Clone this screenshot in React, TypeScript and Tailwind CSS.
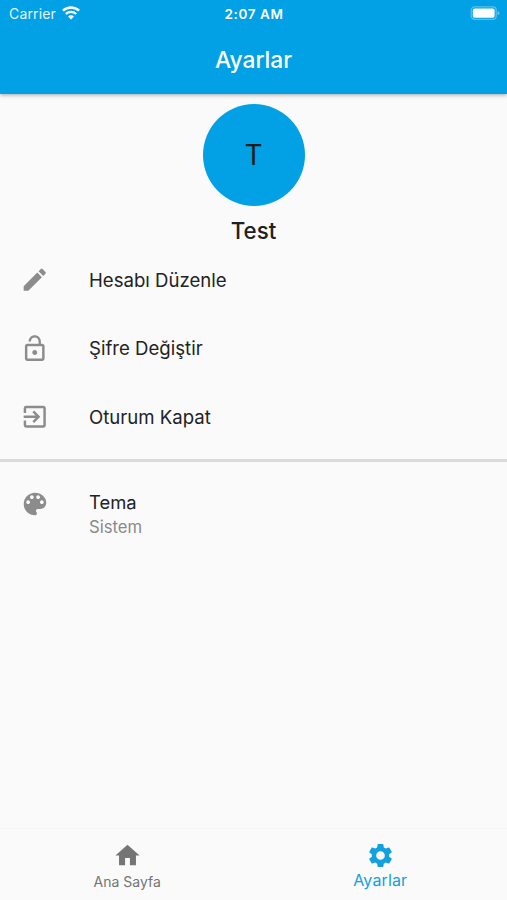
import type { ReactNode } from "react";
import {
  MdEdit,
  MdExitToApp,
  MdHome,
  MdLockOpen,
  MdSettings,
} from "react-icons/md";
import type { IconType } from "react-icons";

interface TileProps {
  icon: IconType;
  children: ReactNode;
}

const WifiIcon = () => (
  <svg viewBox="0 0 18 14" className="h-[14px] w-[18px]" fill="none">
    <path d="M.9 4.7a11.8 11.8 0 0 1 16.2 0" stroke="white" strokeWidth="2.5" />
    <path d="M3.8 8a7.5 7.5 0 0 1 10.4 0" stroke="white" strokeWidth="2.3" />
    <path d="M9 13.6 6 10.6a4.2 4.2 0 0 1 6 0z" fill="white" />
  </svg>
);

const BatteryIcon = () => (
  <svg viewBox="0 0 30 14" className="h-[14px] w-[30px]" fill="none">
    <rect
      x="1.2"
      y="0.9"
      width="25"
      height="12.4"
      rx="3.4"
      stroke="white"
      strokeOpacity="0.35"
      strokeWidth="1.3"
    />
    <rect x="2.8" y="2.5" width="21.8" height="9.2" rx="1.8" fill="white" />
    <path d="M27.6 5c2.4.8 2.4 3.4 0 4.2z" fill="white" fillOpacity="0.45" />
  </svg>
);

const PaletteIcon = () => (
  <svg
    viewBox="0 0 24 24"
    className="-mt-px size-[30px] shrink-0 text-[#8c8c8c]"
    fill="currentColor"
  >
    <path d="M12 3c-4.97 0-9 4.03-9 9s4.03 9 9 9c.83 0 1.5-.67 1.5-1.5 0-.39-.15-.74-.39-1.01-.23-.26-.38-.61-.38-.99 0-.83.67-1.5 1.5-1.5H16c2.76 0 5-2.24 5-5 0-4.42-4.03-8-9-8zm-5.5 9c-.83 0-1.5-.67-1.5-1.5S5.67 9 6.5 9 8 9.67 8 10.5 7.33 12 6.5 12zm3-4C8.67 8 8 7.33 8 6.5S8.67 5 9.5 5s1.5.67 1.5 1.5S10.33 8 9.5 8zm5 0c-.83 0-1.5-.67-1.5-1.5S13.67 5 14.5 5s1.5.67 1.5 1.5S15.33 8 14.5 8zm3 4c-.83 0-1.5-.67-1.5-1.5S16.67 9 17.5 9s1.5.67 1.5 1.5-.67 1.5-1.5 1.5z" />
  </svg>
);

const StatusBar = () => (
  <div className="grid h-[26px] grid-cols-3 items-center px-[7px]">
    <div className="flex items-center gap-[6px] pl-[2px] text-[14px] tracking-[0.15px] text-white/90">
      <span>Carrier</span>
      <WifiIcon />
    </div>
    <span className="pt-[2px] pl-px text-center text-[13.5px] font-semibold tracking-[0.6px]">
      2:07 AM
    </span>
    <div className="flex justify-end">
      <BatteryIcon />
    </div>
  </div>
);

const Tile = ({ icon: Icon, children }: TileProps) => (
  <li className="flex h-[68.5px] items-center pl-5">
    <Icon className="size-[29.5px] shrink-0 text-[#8c8c8c]" />
    <span className="ml-[39.5px] text-[18.6px] leading-6 whitespace-nowrap text-[#222]">
      {children}
    </span>
  </li>
);

export default function App() {
  return (
    <div className="flex h-screen w-full flex-col bg-[#fafafa] font-['Inter',sans-serif]">
      <header className="z-10 h-[94px] shrink-0 bg-[#02a0e4] text-white shadow-[0_1px_4px_rgba(0,0,0,0.35)]">
        <StatusBar />
        <h1 className="pt-[18px] text-center text-[22.8px] leading-8 font-medium">
          Ayarlar
        </h1>
      </header>

      <main className="flex-1">
        <div className="flex flex-col items-center pt-[9.5px] pl-px">
          <div className="flex size-[102.5px] items-center justify-center rounded-full bg-[#02a0e4] pr-px text-[28px] text-[#1d1d1d]">
            T
          </div>
          <p className="mt-[9px] pr-px text-[22.3px] leading-8 font-medium text-[#202020]">
            Test
          </p>
        </div>

        <ul className="-mt-[1.3px]">
          <Tile icon={MdEdit}>Hesabı Düzenle</Tile>
          <Tile icon={MdLockOpen}>Şifre Değiştir</Tile>
          <Tile icon={MdExitToApp}>Oturum Kapat</Tile>
        </ul>

        <div className="mt-[7.8px] h-[2.5px] bg-[#dadada]" />

        <div className="flex pt-[28px] pl-5">
          <PaletteIcon />
          <div className="ml-[39px]">
            <p className="text-[18.4px] leading-[25px] text-[#222]">Tema</p>
            <p className="text-[16.7px] leading-[25px] text-[#8a8a8a]">
              Sistem
            </p>
          </div>
        </div>
      </main>

      <nav className="grid h-[72px] shrink-0 grid-cols-2 border-t border-[#f6f6f6]">
        <div className="flex flex-col items-center pt-[12px] pl-px text-[#757575]">
          <MdHome className="size-[29px]" />
          <span className="mt-[2px] text-[14px] leading-5">Ana Sayfa</span>
        </div>
        <div className="flex flex-col items-center pt-[12px] text-[#149fdd]">
          <MdSettings className="size-[29px]" />
          <span className="text-[16px] leading-5 tracking-[0.15px]">
            Ayarlar
          </span>
        </div>
      </nav>
    </div>
  );
}
